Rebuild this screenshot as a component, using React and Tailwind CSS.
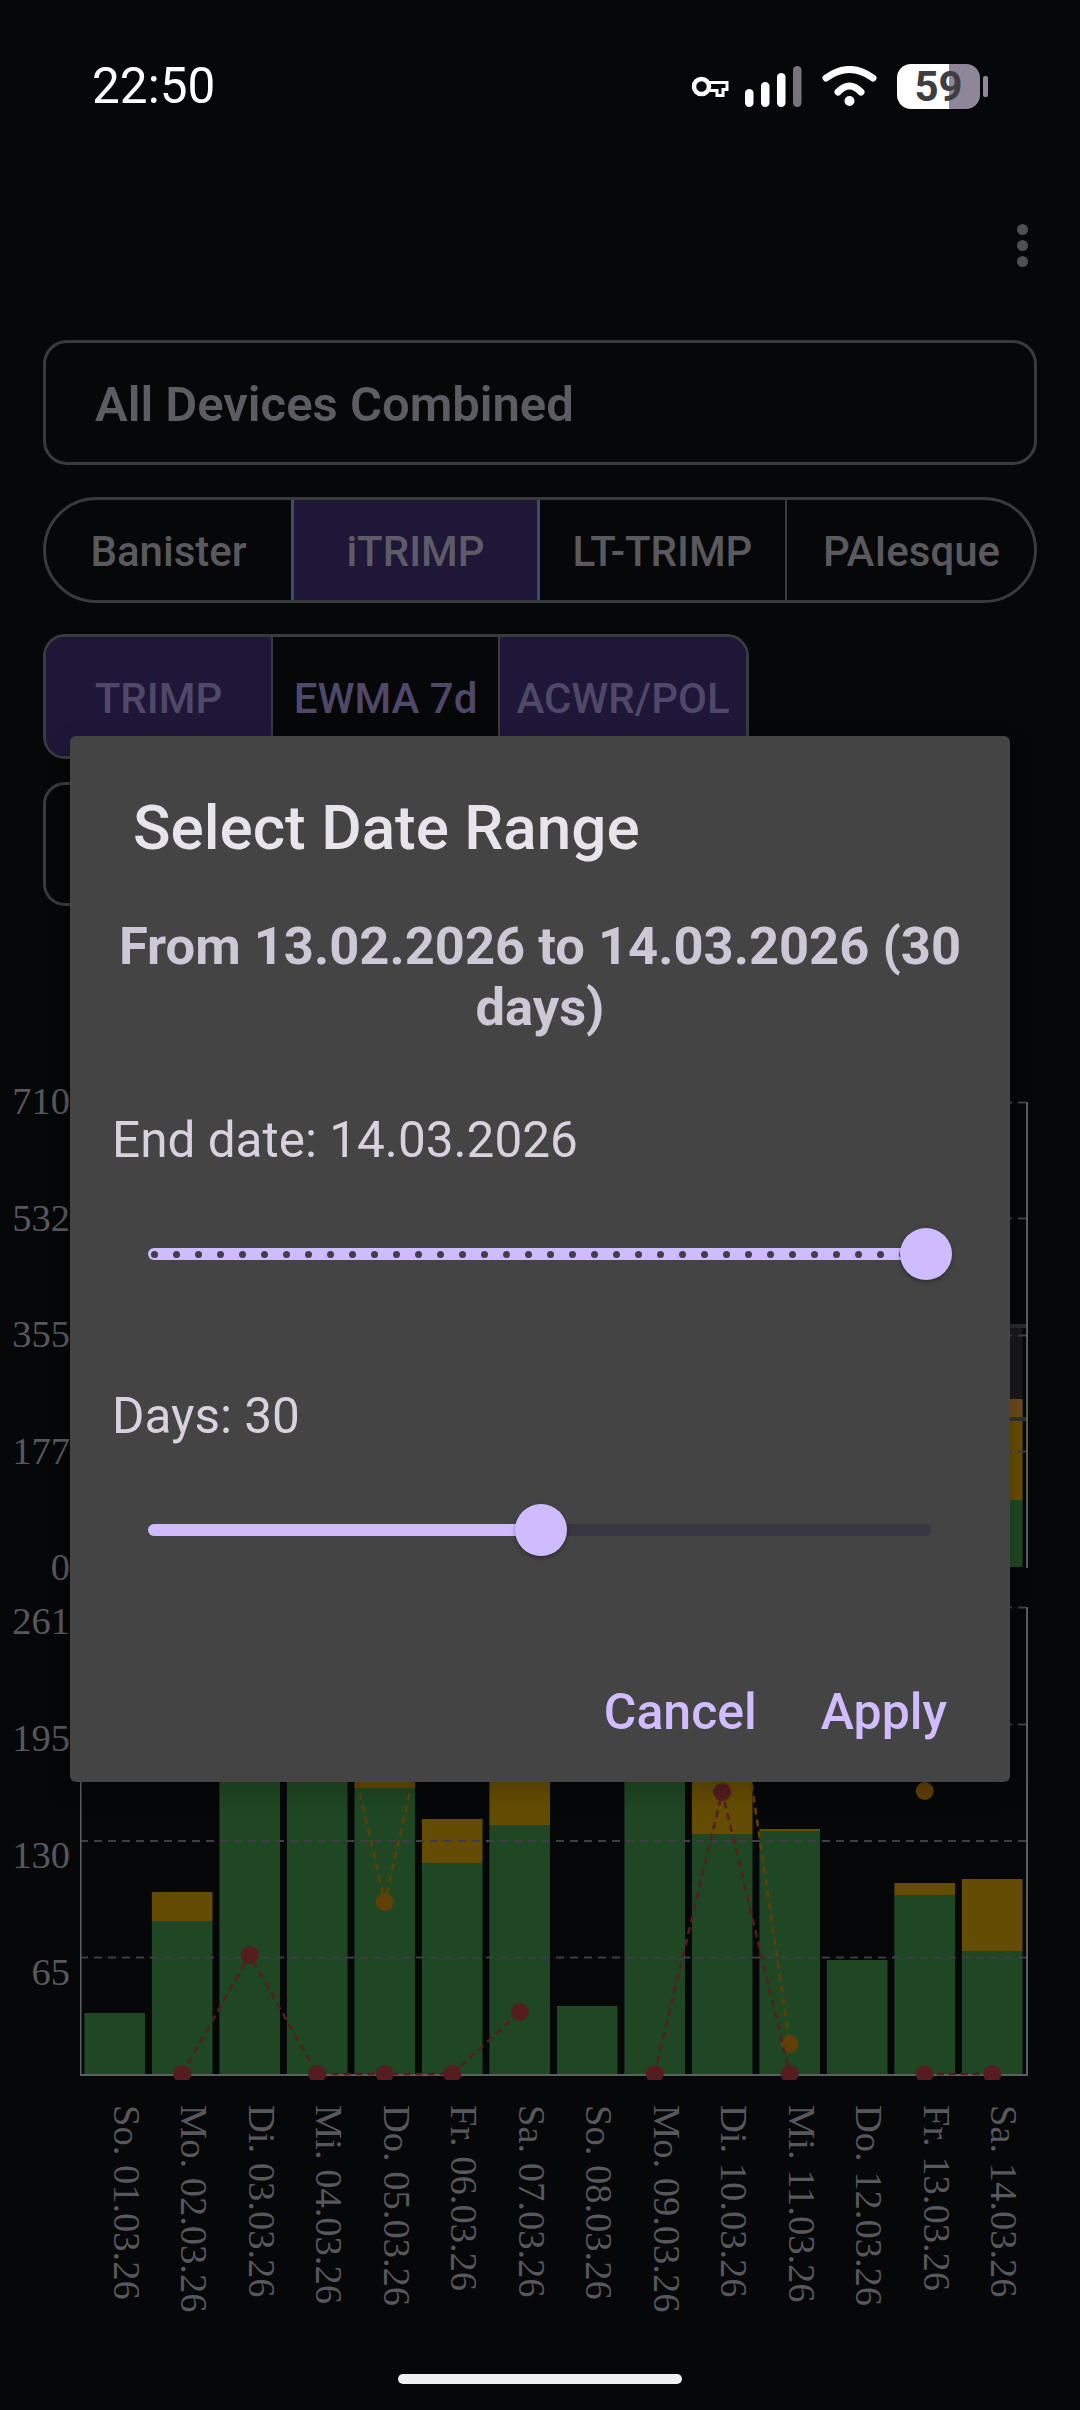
import React from 'react'

const bars = [
  { green: 2013 },
  { green: 1921, orange: 1892 },
  { green: 1640 },
  { green: 1640 },
  { green: 1788, orange: 1700 },
  { green: 1863, orange: 1819 },
  { green: 1825, orange: 1700 },
  { green: 2006 },
  { green: 1650 },
  { green: 1834, orange: 1700 },
  { green: 1831, orange: 1829 },
  { green: 1960 },
  { green: 1895, orange: 1883 },
  { green: 1951, orange: 1879 },
]

const BAR_X = 84.4
const BAR_W = 60.6
const PITCH = 67.5
const BASE = 2074
const cx = (i) => BAR_X + BAR_W / 2 + PITCH * i

const redRuns = [
  [[1, BASE], [2, 1955], [3, BASE], [4, BASE], [5, BASE], [6, 2012]],
  [[8, BASE], [9, 1792], [10, BASE]],
  [[12, BASE], [13, BASE]],
]

const orangeRuns = [
  [[3, 1606], [4, 1902], [5, 1606]],
  [[9, 1582], [10, 2044]],
  [[12, 1791]],
]

const dates = [
  'So. 01.03.26', 'Mo. 02.03.26', 'Di. 03.03.26', 'Mi. 04.03.26', 'Do. 05.03.26',
  'Fr. 06.03.26', 'Sa. 07.03.26', 'So. 08.03.26', 'Mo. 09.03.26', 'Di. 10.03.26',
  'Mi. 11.03.26', 'Do. 12.03.26', 'Fr. 13.03.26', 'Sa. 14.03.26',
]

function StatusIcons() {
  return (
    <div className="flex items-center">
      {/* vpn key */}
      <svg width="38" height="22" viewBox="0 0 38 22" fill="none" stroke="#fff">
        <circle cx="10.5" cy="10.5" r="7.5" strokeWidth="4.5" />
        <path d="M17 6.5H36V13.5H32V19.5H26V14.5H17" strokeWidth="3" />
      </svg>
      {/* signal */}
      <svg className="ml-[16px]" width="58" height="42" viewBox="0 0 58 42">
        <rect x="0" y="23" width="8.5" height="18" rx="4.2" fill="#fff" />
        <rect x="16" y="16" width="8.5" height="25" rx="4.2" fill="#fff" />
        <rect x="32" y="7" width="8.5" height="34" rx="4.2" fill="#fff" />
        <rect x="48" y="0" width="8.5" height="41" rx="4.2" fill="#77747b" />
      </svg>
      {/* wifi */}
      <svg className="ml-[19px]" width="56" height="41" viewBox="0 0 56 41" fill="none" stroke="#fff" strokeWidth="7" strokeLinecap="round">
        <path d="M4 12Q27.5 -5 51 12" />
        <path d="M16 26Q27.5 14 39 26" />
        <circle cx="27.5" cy="35" r="5" fill="#fff" stroke="none" />
      </svg>
      {/* battery */}
      <svg className="ml-[19px]" width="92" height="46" viewBox="0 0 92 46">
        <defs>
          <clipPath id="batt">
            <rect x="0" y="0" width="83" height="45" rx="14" />
          </clipPath>
        </defs>
        <g clipPath="url(#batt)">
          <rect x="0" y="0" width="52" height="45" fill="#fff" />
          <rect x="52" y="0" width="31" height="45" fill="#8f8799" />
        </g>
        <rect x="86" y="12" width="5" height="21" rx="2" fill="#8f8799" />
        <text x="41.5" y="37" textAnchor="middle" fontFamily="Roboto, sans-serif" fontWeight="700" fontSize="42" fill="#3d3d42">59</text>
      </svg>
    </div>
  )
}

function Segment({ label, width, selected, last }) {
  return (
    <div
      className={`flex items-center justify-center pt-[3px] ${width} ${
        selected ? 'bg-[#1f1738]' : ''
      } ${last ? '' : 'border-r-[2px] border-[#3a3a3e]'}`}
    >
      {label}
    </div>
  )
}

function YLabel({ children }) {
  return <div className="h-0 flex items-center justify-end">{children}</div>
}

function UpperChart() {
  return (
    <svg width="950" height="480" viewBox="80 1095 950 480" fill="none">
      {/* only the last bar shows beside the dialog */}
      <rect x="962" y="1328" width="60.6" height="71" fill="#18181b" />
      <rect x="962" y="1399" width="60.6" height="18" fill="#6b4a1c" />
      <rect x="962" y="1421" width="60.6" height="79" fill="#644c03" />
      <rect x="962" y="1500" width="60.6" height="67" fill="#1f4723" />
      <rect x="80" y="1324" width="947" height="4" fill="#2a2a2e" />
      <rect x="80" y="1417" width="947" height="4" fill="#303034" />
      <g stroke="#403d46" strokeWidth="2" strokeDasharray="8 6">
        <path d="M80 1102.5H1026" />
        <path d="M80 1218.5H1026" />
        <path d="M80 1335.5H1026" />
        <path d="M80 1451.5H1026" />
      </g>
      <path d="M1027 1102V1568" stroke="#5e5e62" strokeWidth="2" />
    </svg>
  )
}

function LowerChart() {
  return (
    <svg width="950" height="480" viewBox="80 1600 950 480" fill="none">
      {bars.map((b, i) => (
        <g key={i}>
          {b.orange && (
            <rect x={BAR_X + PITCH * i} y={b.orange} width={BAR_W} height={b.green - b.orange} fill="#644c03" />
          )}
          <rect x={BAR_X + PITCH * i} y={b.green} width={BAR_W} height={BASE - b.green} fill="#1f4723" />
        </g>
      ))}
      <g stroke="#403d46" strokeWidth="2" strokeDasharray="8 6">
        <path d="M80 1607.5H1026" />
        <path d="M80 1724.5H1026" />
        <path d="M80 1841H1026" />
        <path d="M80 1957.5H1026" />
      </g>
      <path d="M1027 1607V2075H80.5V1607" stroke="#5e5e62" strokeWidth="2" />
      {orangeRuns.map((run, r) => (
        <g key={r}>
          <polyline
            points={run.map(([i, y]) => `${cx(i)},${y}`).join(' ')}
            stroke="#5f4006"
            strokeWidth="2.5"
            strokeDasharray="7 5"
          />
          {run.filter(([, y]) => y > 1700).map(([i, y]) => (
            <circle key={i} cx={cx(i)} cy={y} r="9" fill="#5f4006" />
          ))}
        </g>
      ))}
      {redRuns.map((run, r) => (
        <g key={r}>
          <polyline
            points={run.map(([i, y]) => `${cx(i)},${y}`).join(' ')}
            stroke="#551d1f"
            strokeWidth="2.5"
            strokeDasharray="7 5"
          />
          {run.map(([i, y]) => (
            <circle key={i} cx={cx(i)} cy={y} r="9" fill="#551d1f" />
          ))}
        </g>
      ))}
    </svg>
  )
}

function Thumb({ className }) {
  return (
    <div className={`absolute top-[-20px] w-[52px] h-[52px] rounded-full bg-[#cfbcff] shadow-[0_2px_4px_rgba(0,0,0,0.35)] ${className}`} />
  )
}

function DateDialog() {
  return (
    <div className="absolute left-[70px] top-[736px] w-[940px] h-[1046px] rounded-[6px] bg-[#444444] shadow-[0_8px_24px_rgba(0,0,0,0.22)] flex flex-col">
      <h2 className="mt-[57px] ml-[63px] text-[62px] leading-[70px] font-medium text-[#e8e4ec]">Select Date Range</h2>
      <p className="mt-[53px] px-[30px] text-center text-[52.5px] leading-[61px] font-bold text-[#cdc8d6]">
        From 13.02.2026 to 14.03.2026 (30 days)
      </p>
      <p className="mt-[74px] ml-[42px] text-[49.5px] leading-[56px] text-[#d8d2de]">End date: 14.03.2026</p>
      <div className="relative mt-[80px] ml-[78px] w-[783px] h-[12px] rounded-full bg-[#cfbcff]">
        <div className="flex justify-between px-[2.5px] pt-[2.5px]">
          {Array.from({ length: 36 }).map((_, i) => (
            <div key={i} className="w-[7px] h-[7px] rounded-full bg-[#433e4a]" />
          ))}
        </div>
        <Thumb className="left-[752px]" />
      </div>
      <p className="mt-[128px] ml-[42px] text-[49.5px] leading-[56px] text-[#d8d2de]">Days: 30</p>
      <div className="relative mt-[80px] ml-[78px] w-[783px] h-[12px] rounded-full bg-[#38363f]">
        <div className="w-[392px] h-full rounded-l-full bg-[#cfbcff]" />
        <Thumb className="left-[367px]" />
      </div>
      <div className="mt-[146px] pr-[63px] flex justify-end gap-[64px] text-[50px] leading-[60px] font-medium text-[#d0bcff]">
        <span>Cancel</span>
        <span>Apply</span>
      </div>
    </div>
  )
}

export default function App() {
  return (
    <div className="relative w-[1080px] h-[2410px] overflow-hidden bg-[#060709] font-['Roboto',sans-serif] flex flex-col">
      {/* status bar */}
      <div className="mt-[64px] h-[45px] pl-[92px] pr-[91px] flex items-center justify-between">
        <span className="text-[49.5px] leading-[45px] text-white">22:50</span>
        <StatusIcons />
      </div>

      {/* overflow menu */}
      <div className="mt-[115px] pr-[52px] flex flex-col items-end gap-[5px]">
        <div className="w-[11px] h-[11px] rounded-full bg-[#4f4f52]" />
        <div className="w-[11px] h-[11px] rounded-full bg-[#4f4f52]" />
        <div className="w-[11px] h-[11px] rounded-full bg-[#4f4f52]" />
      </div>

      {/* device select */}
      <div className="mt-[73px] ml-[43px] w-[994px] h-[125px] rounded-[24px] border-[3px] border-[#3a3a3e] pl-[49px] pt-[5px] flex items-center text-[49px] font-semibold text-[#5d5c62]">
        All Devices Combined
      </div>

      {/* trimp type */}
      <div className="mt-[32px] ml-[43px] w-[994px] h-[106px] rounded-full border-[3px] border-[#3a3a3e] overflow-hidden flex text-[42px] font-medium text-[#5a595e]">
        <Segment label="Banister" width="w-[245px]" last />
        <div className="w-[249px] -my-[3px] pt-[3px] flex items-center justify-center bg-[#1f1738] border-[3px] border-[#4d4566] text-[#5e5b68]">iTRIMP</div>
        <Segment label="LT-TRIMP" width="w-[247px]" />
        <div className="w-[247px] pl-[2px] pt-[3px] flex items-center justify-center">PAIesque</div>
      </div>

      {/* series toggles */}
      <div className="mt-[31px] ml-[43px] w-[706px] h-[125px] rounded-[22px] border-[3px] border-[#3a3a3e] overflow-hidden flex text-[42px] font-medium text-[#4f4868]">
        <Segment label="TRIMP" width="w-[227px]" selected />
        <Segment label="EWMA 7d" width="w-[227px]" />
        <Segment label="ACWR/POL" width="w-[246px]" selected last />
      </div>

      {/* hidden behind the dialog */}
      <div className="mt-[23px] ml-[43px] w-[700px] h-[124px] rounded-[22px] border-[3px] border-[#3a3a3e]" />

      {/* upper chart */}
      <div className="mt-[189px] flex font-['Liberation_Serif',serif] text-[38.5px] text-[#58585c]">
        <div className="w-[80px] h-[466px] mt-[7px] pr-[10px] flex flex-col justify-between">
          <YLabel>710</YLabel>
          <YLabel>532</YLabel>
          <YLabel>355</YLabel>
          <YLabel>177</YLabel>
          <YLabel>0</YLabel>
        </div>
        <UpperChart />
      </div>

      {/* lower chart */}
      <div className="mt-[25px] flex font-['Liberation_Serif',serif] text-[38.5px] text-[#58585c]">
        <div className="w-[80px] h-[351px] mt-[22px] pr-[10px] flex flex-col justify-between">
          <YLabel>261</YLabel>
          <YLabel>195</YLabel>
          <YLabel>130</YLabel>
          <YLabel>65</YLabel>
        </div>
        <LowerChart />
      </div>

      {/* date labels */}
      <div className="mt-[25px] pl-[93px] flex font-['Liberation_Serif',serif] text-[38.5px] leading-[44px] text-[#58585c]">
        {dates.map((d) => (
          <div key={d} className="w-[67.5px] flex justify-center">
            <span className="[writing-mode:vertical-rl] whitespace-nowrap">{d}</span>
          </div>
        ))}
      </div>

      {/* home indicator */}
      <div className="mt-auto mb-[26px] self-center w-[284px] h-[10px] rounded-full bg-[#f0f0f4]" />

      <DateDialog />
    </div>
  )
}
